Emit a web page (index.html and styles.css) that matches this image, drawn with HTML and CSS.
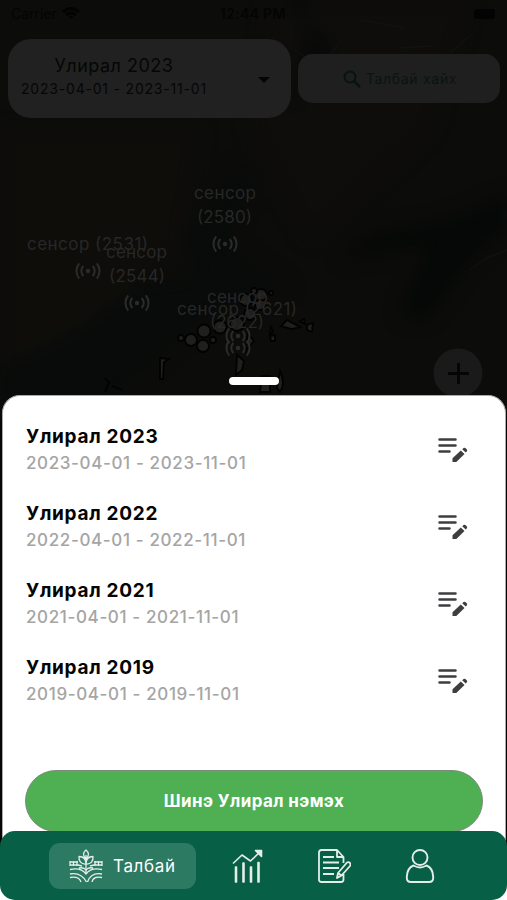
FILE: index.html
```html
<!DOCTYPE html>
<html lang="mn">
<head>
<meta charset="utf-8">
<meta name="viewport" content="width=device-width, initial-scale=1">
<title>Улирал</title>
<link rel="stylesheet" href="styles.css">
</head>
<body>
<svg width="0" height="0" class="defs" aria-hidden="true">
  <symbol id="edit" viewBox="0 0 30 26">
    <path d="M1.500 1.400H17.500M1.500 7.500H17.500M1.500 13.600H11.500" fill="none" stroke="#3e3e40" stroke-width="2.500" stroke-linecap="round"/>
    <path d="M14.500 24V20.300L22.800 12.500L26.500 16L18.300 24ZM24.200 11.300L25.600 10Q26.500 9.300 27.400 10.100L28.900 11.600Q29.600 12.400 28.900 13.300L27.700 14.500Z" fill="#3e3e40"/>
  </symbol>
  <symbol id="signal" viewBox="-13 -9 26 18">
    <circle r="2.200" fill="#2b2b2b"/>
    <path d="M-4.600-5A7 7 0 0 0-4.600 5M4.600-5A7 7 0 0 1 4.600 5M-8.800-7.600A12 12 0 0 0-8.800 7.600M8.800-7.600A12 12 0 0 1 8.800 7.600" fill="none" stroke="#2b2b2b" stroke-width="2"/>
  </symbol>
</svg>
<div class="screen">
  <svg class="map" viewBox="0 0 507 420" aria-hidden="true">
    <defs><filter id="soft" x="-20%" y="-20%" width="140%" height="140%" color-interpolation-filters="sRGB"><feGaussianBlur stdDeviation="9"/></filter></defs>
    <rect width="507" height="420" fill="#0c0c0a"/>
    <g filter="url(#soft)">
      <path d="M0 130H200L180 250L90 330L0 370Z" fill="#0e0d0a"/>
      <path d="M250 130L270 0H470L430 130L310 240Z" fill="#0e0d0b"/>
      <path d="M230 170L185 240L200 275L140 285L80 330L0 370V410H100L210 310L290 290L225 240L260 170Z" fill="#080b0a"/>
      <path d="M507 195L450 220L370 235L340 260L430 245L400 315L425 320L470 260L507 225Z" fill="#050807"/>
      <path d="M280 0L335 45L290 120L310 0Z" fill="#070908"/>
    </g>
    <path d="M470 270L487 258L507 250M295 50L320 68L340 42M360 20L405 28M400 48L432 46M450 53L472 34" fill="none" stroke="#11120f" stroke-width="1.500"/>
    <g class="fields">
      <circle cx="181" cy="338" r="3"/><circle cx="191" cy="340" r="6"/><circle cx="204" cy="331" r="6.500"/><circle cx="203" cy="346" r="6"/><circle cx="220" cy="327" r="6.500"/><circle cx="213" cy="340" r="3"/>
      <circle cx="237" cy="324" r="7"/><circle cx="246" cy="300" r="6"/><circle cx="261" cy="295" r="6"/><circle cx="250" cy="314" r="6"/><circle cx="260" cy="305" r="5"/><circle cx="254" cy="291" r="3"/><circle cx="271" cy="293" r="2"/>
      <path d="M281 326L287 320L300 327L292 329Z"/><path d="M307 325L313 323L312 332L307 330Z"/><path d="M271 326L273 332L270 334ZM270 336L275 335L275 341L271 341Z"/>
      <path d="M248 334L254 341L246 350ZM237 355L244 361L242 370L236 375Z"/><path d="M160 358L169 359L164 362L163 379H160Z"/><path d="M262 376H270V392H260ZM280 371Q286 384 280 392L277 388Z"/><path fill="none" d="M105 378L109 383L105 392M112 386L122 390"/><path d="M300 321L304 319L305 324Z"/>
    </g>
    <g class="labels">
      <text x="194" y="199" textLength="62">сенсор</text><text x="197" y="223" textLength="55">(2580)</text>
      <text x="27" y="250" textLength="121">сенсор (2531)</text><text x="106" y="258" textLength="61">сенсор</text><text x="109" y="282" textLength="56">(2544)</text>
      <text x="207" y="303" textLength="61">сенсор</text><text x="177" y="315" textLength="120">сенсор (2621)</text><text x="210" y="328" textLength="54">(2622)</text>
    </g>
    <use href="#signal" x="212" y="235" width="26" height="18"/>
    <use href="#signal" x="75" y="262" width="26" height="18"/>
    <use href="#signal" x="124" y="294" width="26" height="18"/>
    <use href="#signal" x="225" y="327" width="26" height="18"/>
    <use href="#signal" x="225" y="339" width="26" height="18"/>
    <circle cx="458" cy="373" r="24.500" fill="#1a1a1b"/>
    <path d="M448 373.500H469M458.500 363V384" stroke="#050505" stroke-width="2.800"/>
  </svg>
  <header class="status">
    <span class="carrier">Carrier</span>
    <svg width="18" height="13" viewBox="0 0 18 13"><path d="M1 5Q9-2 17 5M4 8Q9 4 14 8" fill="none" stroke="#030303" stroke-width="2.700"/><path d="M6.500 9.500Q9 8 11.500 9.500L9 12Z" fill="#030303"/></svg>
    <span class="clock">12:44 PM</span>
    <span class="battery"></span>
  </header>
  <div class="filters">
    <div class="season-select">
      <div class="season-text"><div class="season-name">Улирал 2023</div><div class="season-range">2023-04-01 - 2023-11-01</div></div>
      <span class="caret"></span>
    </div>
    <div class="search">
      <svg width="18" height="18" viewBox="0 0 18 18" fill="none" stroke="#07140f"><circle cx="7" cy="7" r="5.500" stroke-width="2"/><path d="M11 11L17 17" stroke-width="2.500"/></svg>
      <span>Талбай хайх</span>
    </div>
  </div>
  <div class="handle"></div>
  <main class="sheet">
    <div class="row"><div><h2>Улирал 2023</h2><p>2023-04-01 - 2023-11-01</p></div><svg class="edit"><use href="#edit"/></svg></div>
    <div class="row"><div><h2>Улирал 2022</h2><p>2022-04-01 - 2022-11-01</p></div><svg class="edit"><use href="#edit"/></svg></div>
    <div class="row"><div><h2>Улирал 2021</h2><p>2021-04-01 - 2021-11-01</p></div><svg class="edit"><use href="#edit"/></svg></div>
    <div class="row"><div><h2>Улирал 2019</h2><p>2019-04-01 - 2019-11-01</p></div><svg class="edit"><use href="#edit"/></svg></div>
    <button class="add">Шинэ Улирал нэмэх</button>
  </main>
  <nav class="tabs">
    <a class="tab active">
      <svg width="34" height="34" viewBox="0 0 34 34" stroke-width="1.300">
        <path d="M17 24V6M17 10C13.500 7 14 3.500 17 1C20 3.500 20.500 7 17 10M17 15C12 15.500 9.500 12 10 7.500C14 7.500 17 10 17 15C17 10 20 7.500 24 7.500C24.500 12 22 15.500 17 15"/>
        <path d="M1 12V17M4.500 12V17M8 12V17M1 13H9M1 16H9L13 17M33 12V17M29.500 12V17M26 12V17M33 13H25M33 16H25L21 17"/>
        <path d="M1 20.500Q12 18 17 25Q22 18 33 20.500M1 25Q12 23 17.500 33M33 25Q22 23 18.500 33M1 28.500Q10 27 12 33M33 28.500Q24 27 23 33M10 19Q15 18 17 21Q19 18 24 19"/>
      </svg>
      <span>Талбай</span>
    </a>
    <a class="tab"><svg width="34" height="34" viewBox="0 0 34 34" stroke-width="1.600"><path d="M2 14.500L11 6L19.500 12L29 3"/><path d="M24.500 1.500H30.500V7.500Z" fill="#e4eee9"/><path d="M4.500 33V18H5.500V33ZM12 33V14H13V33ZM19.500 33V18H20.500V33ZM27 33V13.500H28V33Z"/></svg></a>
    <a class="tab"><svg width="34" height="34" viewBox="0 0 34 34" stroke-width="1.800"><path d="M26.500 14V8L20 1H4.500Q2 1 2 3.500V30.500Q2 33 4.500 33H24Q26.500 33 26.500 30.500V25M20 1V8H26.500M6 8H17M6 13.500H22M6 19H22M6 25H17M20 29L21 24L30 13.500Q31.500 12.500 33 14Q34 15.500 33 17L24.500 26.500ZM21 24L24.500 26.500"/></svg></a>
    <a class="tab"><svg width="34" height="34" viewBox="0 0 34 34" stroke-width="1.900"><circle cx="17" cy="8.500" r="7.500"/><path d="M10.500 16.500Q4 19 3.800 28V29Q3.800 33 8 33H26Q30.200 33 30.200 29V28Q30 19 23.500 16.500Q17 20.500 10.500 16.500Z"/></svg></a>
  </nav>
</div>
</body>
</html>
```
FILE: styles.css
```css
* { box-sizing: border-box; }
body { margin: 0; font-family: Inter, "Liberation Sans", sans-serif; background: #fff; }
.defs { position: absolute; }
.screen { position: relative; width: 507px; height: 900px; overflow: hidden; display: flex; flex-direction: column; background: linear-gradient(#060606 860px, #fff 860px); }
.map { position: absolute; top: 0; left: 0; width: 507px; height: 420px; }
.fields { fill: #1f1f1e; stroke: #020202; stroke-width: 1.8; }
.labels { fill: #272727; font-size: 17px; }
.status, .filters, .handle, .sheet, .tabs { position: relative; flex: none; }
.status { height: 39px; padding: 0 12px 12px 11px; display: flex; align-items: center; color: #040404; font-size: 14px; }
.carrier { width: 51px; }
.clock { margin-left: 140px; font-weight: 600; letter-spacing: .3px; width: 80px; white-space: nowrap; }
.battery { width: 21px; height: 10px; border-radius: 3px; background: #030303; margin-left: auto; }
.filters { height: 338px; display: flex; align-items: flex-start; gap: 7px; padding-left: 8px; }
.season-select { width: 283px; height: 79px; border-radius: 23px; background: #212121; color: #060606; display: flex; align-items: center; justify-content: space-between; padding: 0 21px 5px 13px; }
.season-text { text-align: center; white-space: nowrap; }
.season-name { font-size: 18px; line-height: 25px; letter-spacing: .5px; }
.season-range { font-size: 14px; line-height: 22px; letter-spacing: .8px; }
.caret { border: 6px solid transparent; border-top-color: #050505; border-bottom: 0; margin-top: 7px; }
.search { width: 202px; height: 49px; margin-top: 15px; padding-left: 2px; border-radius: 15px; background: #1f1f1f; color: #0a1411; display: flex; align-items: center; justify-content: center; gap: 5px; font-size: 14px; letter-spacing: .7px; }
.handle { width: 50px; height: 8px; margin-left: 229px; border-radius: 4px; background: #fff; }
.sheet { width: 504px; height: 490px; margin: 10px 0 -54px 2px; padding: 27px 23px 0 22px; border-radius: 18px 18px 0 0; background: #fff; border: 1px solid #aaa; border-bottom: 0; }
.row { height: 77px; padding: 0 14px 0 1px; display: flex; justify-content: space-between; }
h2, p { margin: 0; white-space: nowrap; }
h2 { font-size: 19px; line-height: 28px; font-weight: 650; color: #050505; letter-spacing: .7px; }
p { font-size: 17px; line-height: 24px; font-weight: 500; color: #a5a5a5; letter-spacing: .63px; }
.edit { width: 30px; height: 26px; margin-top: 15px; }
.add { display: block; width: 458px; height: 62px; margin-top: 39px; padding: 0; border: 1px solid #7d8b7d; border-radius: 31px; background: #4eb052; color: #fff; font: 700 17px Inter, "Liberation Sans", sans-serif; letter-spacing: .4px; }
.tabs { height: 69px; padding: 0 70px 0 49px; border-radius: 15px; background: #075f45; display: flex; align-items: center; gap: 52px; }
.tab { display: flex; align-items: center; }
.tab svg { flex: none; fill: none; stroke: #e4eee9; stroke-linejoin: round; }
.active { width: 147px; height: 46px; padding-left: 20px; margin-right: -17px; gap: 10px; border-radius: 11px; background: #2d7a63; color: #fff; font-size: 17px; letter-spacing: .65px; flex: none; }
```
